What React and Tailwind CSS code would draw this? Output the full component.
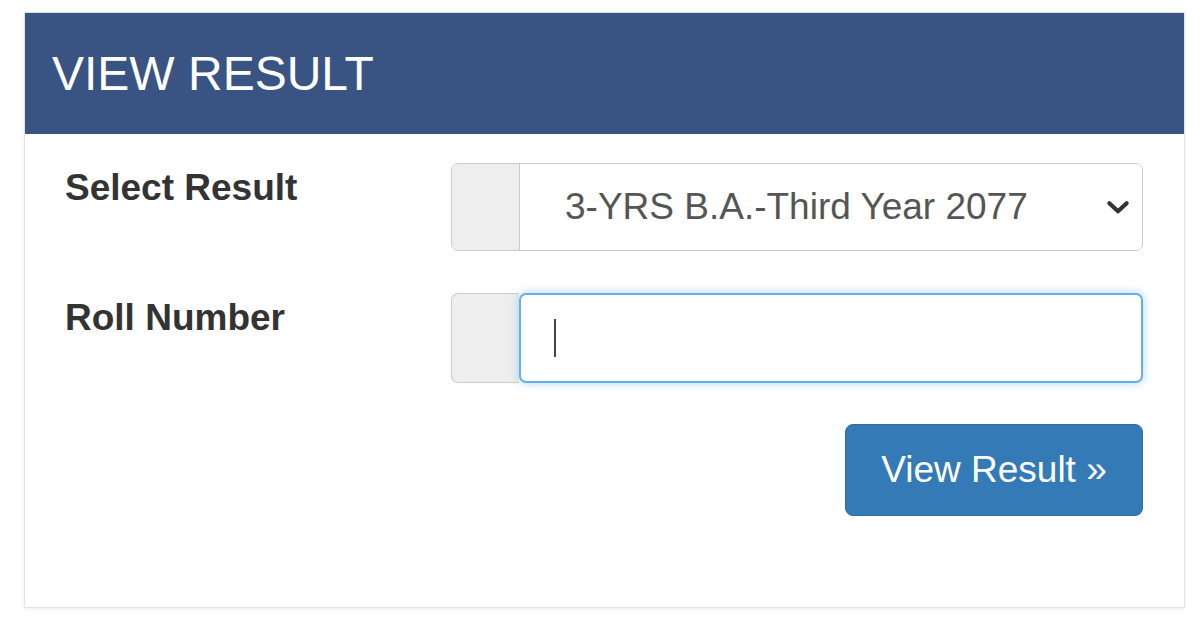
const App = () => {
	return (
		<div className="w-[1200px] h-[630px] bg-white pl-[24px] pt-[12px] font-['Liberation_Sans',Arial,sans-serif]">
			<div className="w-[1161px] h-[596px] border border-[#e3e3e3] shadow-[0_1px_3px_rgba(0,0,0,0.08)] bg-white flex flex-col">
				{/* Heading */}
				<div className="h-[121px] bg-[#395483] flex items-center px-[27px]">
					<h1 className="text-white text-[48px] leading-none">VIEW RESULT</h1>
				</div>

				{/* Form */}
				<div className="flex flex-col pt-[29px] pl-[40px] pr-[41px]">
					<div className="flex">
						<label className="w-[386px] -mt-[3px] text-[37px] font-bold text-[#333] leading-normal">Select Result</label>
						<div className="flex-1 h-[88px] flex border border-[#cccccc] rounded-[7px] overflow-hidden">
							<div className="w-[68px] bg-[#eeeeee] border-r border-[#cccccc]"></div>
							<div className="flex-1 flex items-center justify-between pl-[45px] pr-[11px] bg-white">
								<span className="text-[37px] text-[#555]">3-YRS B.A.-Third Year 2077</span>
								<svg className="w-[26px] h-[26px] text-[#333]" viewBox="0 0 24 24" fill="none" stroke="currentColor" strokeWidth={3.8} strokeLinecap="round" strokeLinejoin="round">
									<path d="M4 8.5l8 7.5 8-7.5" />
								</svg>
							</div>
						</div>
					</div>

					<div className="flex mt-[42px]">
						<label className="w-[386px] -mt-[3px] text-[37px] font-bold text-[#333] leading-normal">Roll Number</label>
						<div className="flex-1 h-[90px] flex">
							<div className="w-[68px] bg-[#eeeeee] border border-r-0 border-[#cccccc] rounded-l-[7px]"></div>
							<div className="flex-1 flex items-center pl-[33px] bg-white border-2 border-[#66afe9] rounded-[7px] shadow-[0_0_10px_rgba(102,175,233,0.55)]">
								<span className="w-[2px] h-[38px] bg-[#444]"></span>
							</div>
						</div>
					</div>

					<div className="flex justify-end mt-[41px]">
						<button className="w-[298px] h-[92px] bg-[#337ab7] rounded-[8px] border border-[#2e6da4] text-white text-[37px]">
							View Result »
						</button>
					</div>
				</div>
			</div>
		</div>
	);
};

export default App;
